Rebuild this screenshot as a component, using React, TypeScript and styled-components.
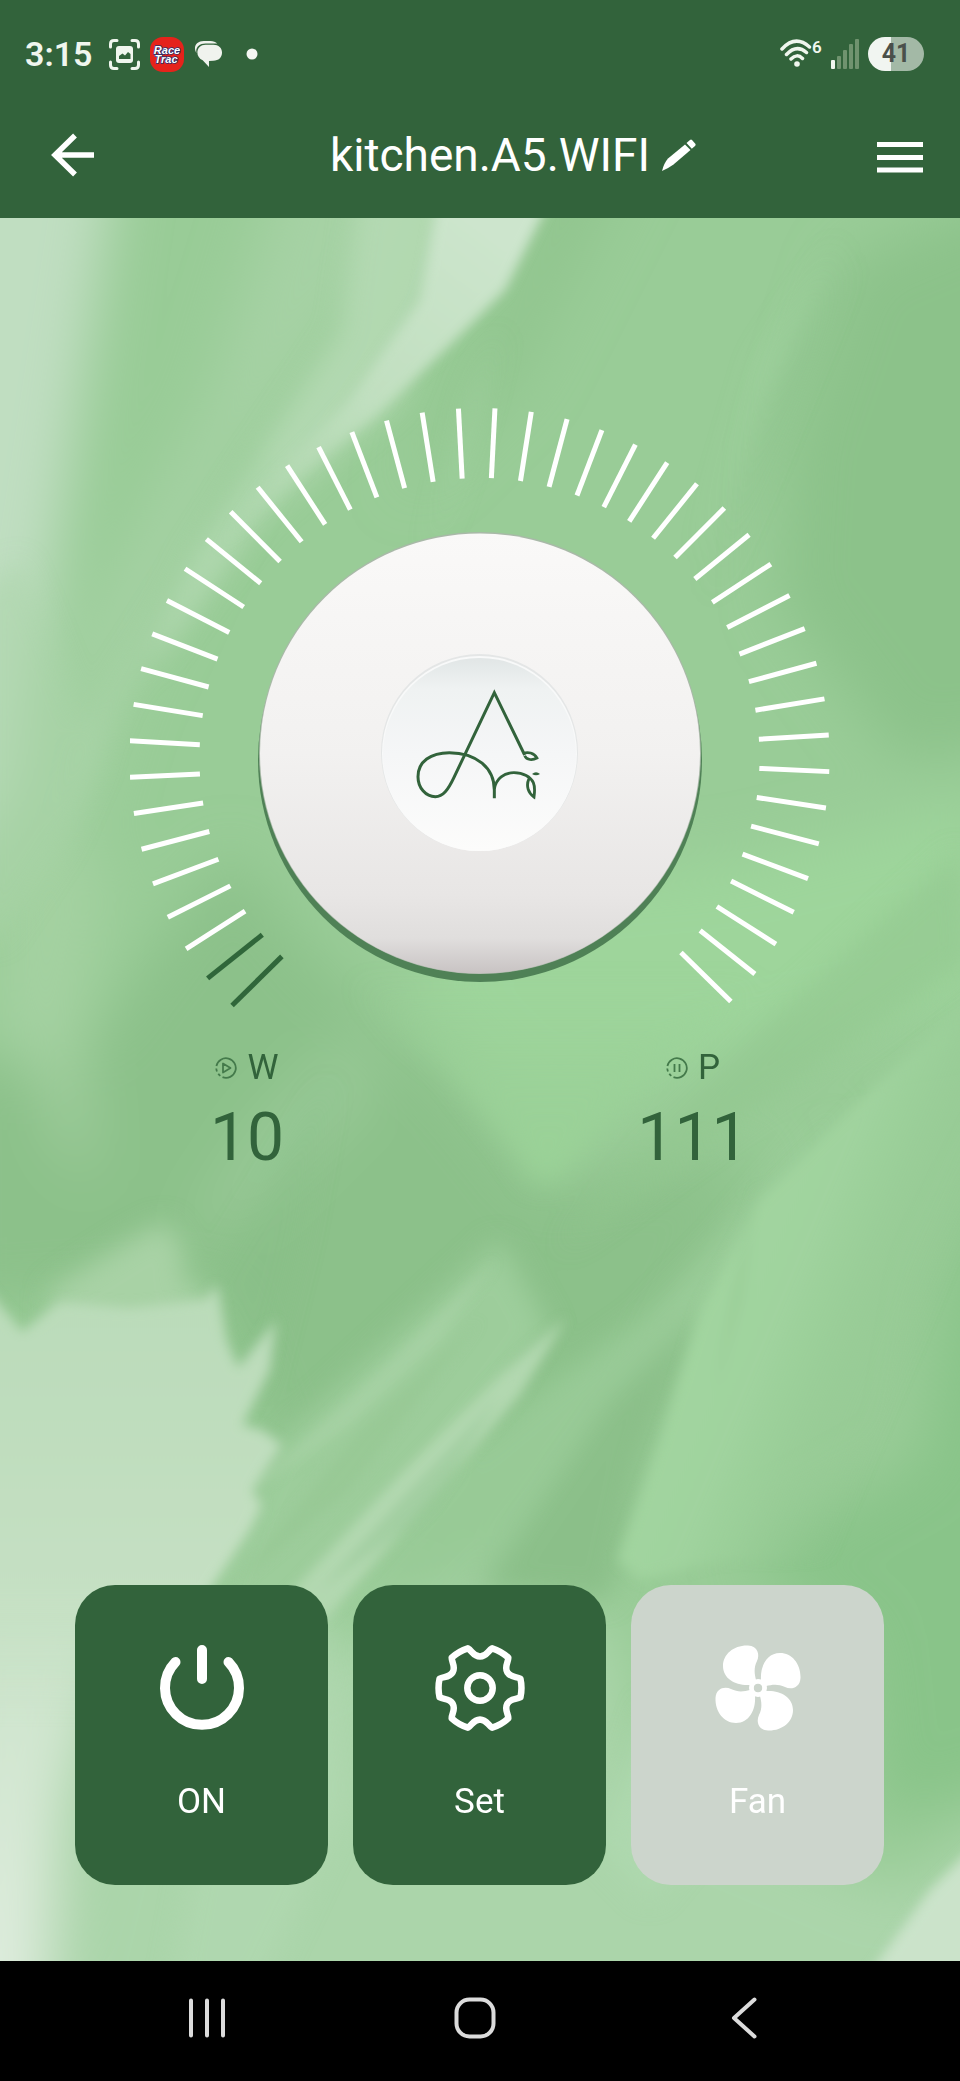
import React from "react";
import styled, { createGlobalStyle } from "styled-components";

const GREEN = "#32633b";

const GlobalStyle = createGlobalStyle`
  * { box-sizing: border-box; }
  body { margin: 0; background: #000; font-family: Roboto, "Liberation Sans", sans-serif; }
  button { margin: 0; padding: 0; border: 0; background: none; color: inherit; font: inherit; cursor: pointer; }
  svg { display: block; }
`;

const Screen = styled.div`
  display: flex;
  flex-direction: column;
  min-height: 100vh;
`;

const Header = styled.header`
  background: ${GREEN};
  color: #fff;
`;

const StatusBar = styled.div`
  display: flex;
  align-items: center;
  justify-content: space-between;
  height: 108px;
  padding: 0 36px 0 25px;
  color: #f0f6ee;
`;

const StatusGroup = styled.div<{ $gap: number }>`
  display: flex;
  align-items: center;
  gap: ${(p) => p.$gap}px;
`;

const Clock = styled.time`
  margin-right: 6px;
  font-size: 34px;
  font-weight: 600;
  line-height: 40px;
`;

const Battery = styled.div`
  width: 56px;
  height: 34px;
  border-radius: 17px;
  background: linear-gradient(90deg, #f1f5f1 41%, #a3b9a6 41%);
  color: #4a504b;
  font-size: 25px;
  font-weight: 700;
  line-height: 34px;
  text-align: center;
`;

const AppBar = styled.div`
  display: grid;
  grid-template-columns: 1fr auto 1fr;
  align-items: center;
  height: 110px;
  padding: 0 37px 16px 51px;
`;

const BarButton = styled.button<{ $end?: boolean }>`
  justify-self: ${(p) => (p.$end ? "end" : "start")};
`;

const TitleGroup = styled.div`
  display: flex;
  align-items: center;
  gap: 12px;
  padding-left: 52px;
`;

const Title = styled.h1`
  margin: 0;
  font-size: 46px;
  font-weight: 400;
  line-height: 52px;
`;

const Main = styled.main`
  position: relative;
  isolation: isolate;
  flex: 1;
  display: flex;
  flex-direction: column;
  padding: 188px 0 76px;
  background: #99cc97;
`;

const Backdrop = styled.svg`
  position: absolute;
  inset: 0;
  z-index: -1;
  width: 100%;
  height: 100%;
`;

const Dial = styled.svg`
  align-self: center;
  width: 100%;
  max-width: 700px;
  height: auto;
`;

const Readings = styled.dl`
  display: grid;
  grid-template-columns: 1fr 1fr;
  margin: 22px 0 60px;
  padding: 0 44px 0 24px;
  color: ${GREEN};
`;

const Reading = styled.div`
  display: flex;
  flex-direction: column;
  align-items: center;
  gap: 12px;
`;

const ReadingName = styled.dt`
  display: flex;
  align-items: center;
  gap: 10px;
  font-size: 35px;
  line-height: 40px;
`;

const ReadingValue = styled.dd`
  margin: 0;
  font-size: 66px;
  line-height: 76px;
`;

const Controls = styled.div`
  display: grid;
  grid-template-columns: repeat(3, 1fr);
  gap: 25px;
  margin-top: auto;
  padding: 0 76px 0 75px;
`;

const ControlCard = styled.button<{ $off?: boolean }>`
  display: flex;
  flex-direction: column;
  align-items: center;
  gap: 46px;
  height: 300px;
  padding-top: 57px;
  border-radius: 40px;
  background: ${(p) => (p.$off ? "#ccd5cc" : GREEN)};
  color: #fff;
  font-size: 35px;
  line-height: 44px;
`;

const SystemNav = styled.nav`
  display: grid;
  grid-template-columns: repeat(3, 1fr);
  place-items: center;
  height: 120px;
  padding: 0 82px 6px 73px;
  background: #000;
  color: #dcdcdc;
`;

const polar = (deg: number, r: number) => {
  const a = (deg * Math.PI) / 180;
  return `${(r * Math.cos(a)).toFixed(2)} ${(r * Math.sin(a)).toFixed(2)}`;
};

const gearPath =
  [0, 60, 120, 180, 240, 300]
    .map(
      (t, i) =>
        `${i ? "L" : "M"}${polar(t - 13, 41.5)} Q${polar(t, 42.5)} ${polar(t + 13, 41.5)} ` +
        `C${polar(t + 18, 38.3)} ${polar(t + 18, 32.3)} ${polar(t + 30, 31.5)} ` +
        `C${polar(t + 42, 32.3)} ${polar(t + 42, 38.3)} ${polar(t + 47, 41.5)}`
    )
    .join(" ") + "Z";

const PowerIcon = () => (
  <svg width="92" height="92" viewBox="-46 -46 92 92" fill="none" stroke="currentColor" strokeWidth="10" strokeLinecap="round" aria-hidden>
    <path d="M-26.500 -26A37 37 0 1 0 26.500 -26M0 -38V-9" />
  </svg>
);

const GearIcon = () => (
  <svg width="92" height="92" viewBox="-46 -46 92 92" fill="none" stroke="currentColor" strokeWidth="6.500" strokeLinejoin="round" aria-hidden>
    <path d={gearPath} />
    <circle r="12.700" />
  </svg>
);

const FanIcon = () => (
  <svg width="92" height="92" viewBox="-46 -46 92 92" fill="currentColor" aria-hidden>
    {[0, 90, 180, 270].map((a) => (
      <path
        key={a}
        transform={`rotate(${a})`}
        d="M3 -8C2 -22 9 -35 22 -35C34 -35 43 -24 42.500 -10C42 0 33 2 27 -1C20 -4.500 14 -3.500 8 -2Z"
      />
    ))}
    <circle r="6.500" fill="none" stroke="currentColor" strokeWidth="5" />
    <circle r="4.200" fill="#ccd5cc" />
  </svg>
);

const ReadingIcon = ({ kind }: { kind: "play" | "pause" }) => (
  <svg width="22" height="22" viewBox="0 0 22 22" fill="none" stroke="#447a4b" strokeWidth="1.800" strokeLinejoin="round" aria-hidden>
    <path d="M1.400 9A9.800 9.800 0 1 1 7.500 20.200" />
    <path d="M1.300 11.500A9.800 9.800 0 0 0 2 14.500M3.300 16.800A9.800 9.800 0 0 0 5.300 18.900" />
    {kind === "play" ? <path d="M8 6.500V15.500L15.500 11Z" /> : <path d="M8.500 7V15M13.500 7V15" />}
  </svg>
);

const ticks = Array.from({ length: 46 }, (_, i) => ({ angle: -134.6 + i * 5.98, active: i < 2 }));

const DialFace = () => (
  <Dial viewBox="0 0 700 620" role="img" aria-label="Intensity dial">
    <defs>
      <linearGradient id="knob" x1="0" y1="0" x2="0" y2="1">
        <stop offset="0" stopColor="#faf9f8" />
        <stop offset="0.500" stopColor="#f2f1f0" />
        <stop offset="0.820" stopColor="#e8e6e5" />
        <stop offset="0.920" stopColor="#e0dedd" />
        <stop offset="1" stopColor="#c8c3c3" />
      </linearGradient>
      <linearGradient id="cap" x1="0" y1="0" x2="0" y2="1">
        <stop offset="0" stopColor="#e1e6e6" />
        <stop offset="0.160" stopColor="#eff2f2" />
        <stop offset="0.500" stopColor="#f5f6f7" />
        <stop offset="1" stopColor="#fcfcfb" />
      </linearGradient>
    </defs>
    {ticks.map((t) => (
      <rect
        key={t.angle}
        x="-5"
        y="-350"
        width="5"
        height="70"
        fill={t.active ? "#30663a" : "#fff"}
        transform={`translate(349.5 352) rotate(${t.angle})`}
      />
    ))}
    <circle cx="350" cy="354" r="222" fill="#4f8156" />
    <circle cx="350" cy="347" r="221" fill="#a9b9a8" />
    <circle cx="350" cy="347.500" r="220" fill="url(#knob)" />
    <circle cx="349.500" cy="346.500" r="98.500" fill="#e4e6e6" />
    <circle cx="349.500" cy="347.500" r="97.500" fill="#f8f9f9" />
    <circle cx="349.500" cy="348.500" r="96.500" fill="url(#cap)" />
    <g transform="translate(230 234) scale(0.333333)" fill="none" stroke={GREEN} strokeWidth="9">
      <path d="M494 345L403 158L282 412C264 450 249 470 226 470C197 470 174 443 174 410C174 365 212 338 268 338C350 338 403 385 403 450V475" />
      <path d="M403 447C408 415 433 398 462 398C490 398 512 411 520 428C526 442 524 457 522 471C505 459 497 438 507 416" strokeWidth="8.500" />
      <path d="M490 341C503 334 522 339 531 354C518 361 500 361 494 347" strokeWidth="8" />
      <path d="M516 402Q528 392 540 402Q528 410 516 402Z" fill={GREEN} stroke="none" />
    </g>
  </Dial>
);

const Painting = () => (
  <Backdrop viewBox="0 218 960 1743" preserveAspectRatio="none" aria-hidden>
    <defs>
      <filter id="edge" x="-30%" y="-30%" width="160%" height="160%">
        <feGaussianBlur stdDeviation="6" />
      </filter>
      <filter id="soft" x="-40%" y="-40%" width="180%" height="180%">
        <feGaussianBlur stdDeviation="13" />
      </filter>
      <filter id="wide" x="-50%" y="-50%" width="200%" height="200%">
        <feGaussianBlur stdDeviation="28" />
      </filter>
      <linearGradient id="pale" gradientUnits="userSpaceOnUse" x1="0" y1="1290" x2="0" y2="1720">
        <stop offset="0" stopColor="#badbb9" />
        <stop offset="0.700" stopColor="#c5e0c3" />
        <stop offset="1" stopColor="#c8e2c6" stopOpacity="0" />
      </linearGradient>
      <linearGradient id="paleFoot" gradientUnits="userSpaceOnUse" x1="0" y1="1500" x2="0" y2="1961">
        <stop offset="0" stopColor="#c4e0c3" />
        <stop offset="1" stopColor="#deecdd" />
      </linearGradient>
      <linearGradient id="beam" gradientUnits="userSpaceOnUse" x1="480" y1="218" x2="220" y2="560">
        <stop offset="0" stopColor="#cde5cd" />
        <stop offset="0.500" stopColor="#c0dfbf" />
        <stop offset="1" stopColor="#b0d8ae" stopOpacity="0" />
      </linearGradient>
      <linearGradient id="petal" gradientUnits="userSpaceOnUse" x1="660" y1="1300" x2="900" y2="1400">
        <stop offset="0" stopColor="#a2d5a0" />
        <stop offset="0.450" stopColor="#a0d39e" />
        <stop offset="1" stopColor="#93c991" stopOpacity="0" />
      </linearGradient>
      <linearGradient id="point" gradientUnits="userSpaceOnUse" x1="0" y1="980" x2="0" y2="1180">
        <stop offset="0" stopColor="#9bd198" stopOpacity="0" />
        <stop offset="0.500" stopColor="#9bd198" stopOpacity="0.800" />
        <stop offset="1" stopColor="#9ad297" />
      </linearGradient>
    </defs>
    <g filter="url(#wide)">
      <path d="M-80 140H120L80 400L50 600L20 780L-80 960Z" fill="#c0dec1" />
      <path d="M290 140H420L360 300L230 470L120 700L60 900L0 1100V900L100 600L210 400Z" fill="#a6d2a4" />
      <path d="M850 260L1040 180V740L900 760L780 600L790 440Z" fill="#8cc28a" />
      <path d="M560 140H640L520 380L400 500L500 300Z" fill="#91c58e" />
      <path d="M60 1080L230 850L320 960L460 1090L540 1190L760 1150L700 1300L620 1450L500 1600L250 1590L270 1450L210 1290L-60 1310V1040Z" fill="#8cc18a" />
      <path d="M0 960L60 1130L90 1190L80 1040L110 860L0 860Z" fill="#a4d1a1" />
      <path d="M1030 1130L950 1280L920 1460L740 1560L860 1640L880 1820L1030 1780Z" fill="#89c489" />
      <path d="M110 1740L500 1570L620 1640L640 1780L900 1890L1030 1800V2040H40Z" fill="#abd5aa" />
      <path d="M-60 1450H150L120 1640L70 1800L40 2040H-60Z" fill="url(#paleFoot)" />
      <path d="M520 880L740 860L980 800V1000L700 1060L540 1120L400 980Z" fill="#9ed59b" />
      <path d="M380 1090L250 1220L180 1240L260 1120L360 1020Z" fill="#98c996" />
    </g>
    <g filter="url(#soft)">
      <path d="M360 190H480L400 400L260 520L150 670L190 560L280 420L340 330Z" fill="#b9dcb8" opacity="0.750" />
      <path d="M310 940L400 1030L450 1070L510 1145L535 1182L560 1178L650 1070L780 970L860 880L760 860L640 900Z" fill="url(#point)" />
      <path d="M290 480L210 560L120 700L60 850L90 720L180 580L260 450Z" fill="#acd5aa" opacity="0.600" />
      <path d="M850 260L790 350L740 500L710 600L780 430Z" fill="#84bb83" opacity="0.300" />
      <path d="M840 240L760 400L700 560L760 360Z" fill="#a8d9a7" opacity="0.400" />
      <path d="M500 330L470 440L430 560L470 400Z" fill="#acd8ab" opacity="0.600" />
      <path d="M-20 590L20 560L100 760L60 850L0 940H-20Z" fill="#a9d4a7" opacity="0.500" />
      <path d="M960 850L780 1010L650 1140L560 1250L700 1150L970 960Z" fill="#93c690" opacity="0.600" />
      <path d="M850 1090L720 1240L640 1320L540 1390L420 1490L300 1620H440L560 1490L680 1350Z" fill="#a0d09e" opacity="0.600" />
      <path d="M700 1310L610 1400L480 1590L610 1600L640 1460Z" fill="#8bbf89" />
      <path d="M500 1240L380 1350L270 1450L200 1620H320L440 1480L550 1330Z" fill="#9dcd9b" />
      <path d="M330 1080L210 1280L260 1400L300 1240Z" fill="#86bc85" opacity="0.300" />
      <path d="M330 1600L220 1720L170 1990L260 1990L350 1800Z" fill="#b2d9b3" opacity="0.600" />
      <path d="M650 1700L600 1850L650 1900L700 1840Z" fill="#add8ae" />
      <path d="M50 1290L130 1240L165 1222L182 1245L185 1290L210 1290V1360H50Z" fill="#a8d2a5" />
    </g>
    <g filter="url(#edge)">
      <path d="M440 190H555L505 290L450 345L370 420L300 475L210 560L260 490L350 400L420 300Z" fill="url(#beam)" />
      <path d="M980 990L860 1100L760 1200L700 1310L660 1440L618 1560L640 1580L720 1560L880 1560L980 1400Z" fill="url(#petal)" />
      <path d="M758 1180L735 1290L715 1390L740 1300Z" fill="#8fc48d" opacity="0.500" />
      <path d="M566 1318L500 1375L400 1475L265 1620H325L420 1510L520 1395Z" fill="#b2d8b0" />
      <path d="M495 1260L380 1370L240 1500L350 1425L440 1340Z" fill="#aad3a8" opacity="0.600" />
      <path d="M480 1320L360 1430L230 1590L350 1490Z" fill="#93c591" opacity="0.500" />
      <path d="M500 1395L400 1500L320 1590L430 1510Z" fill="#94c693" opacity="0.500" />
      <path d="M-20 1280L22 1332L60 1302L130 1308L205 1300L217 1285L226 1340L238 1368L276 1320L270 1370L242 1425L262 1430L282 1445L252 1490L262 1505L250 1530L210 1590L170 1700L150 1740H-20Z" fill="url(#pale)" />
      <path d="M980 1840L930 1890L865 1980H980Z" fill="#cbe3ca" />
    </g>
  </Backdrop>
);

export default function App() {
  return (
    <Screen>
      <GlobalStyle />
      <Header>
        <StatusBar>
          <StatusGroup $gap={10}>
            <Clock>3:15</Clock>
            <svg width="31" height="31" viewBox="0 0 31 31" fill="none" stroke="currentColor" strokeWidth="3" strokeLinecap="round" aria-hidden>
              <path d="M1.500 8V5Q1.500 1.500 5 1.500H8M23 1.500H26Q29.500 1.500 29.500 5V8M29.500 23V26Q29.500 29.500 26 29.500H23M8 29.500H5Q1.500 29.500 1.500 26V23" />
              <rect x="7" y="7" width="17" height="17" rx="3" fill="currentColor" stroke="none" />
              <path d="M10 20V17L13.500 14.500L16 16.500L19 13L21.500 15V20Z" fill={GREEN} stroke="none" />
            </svg>
            <svg width="34" height="35" viewBox="0 0 34 35" aria-label="RaceTrac" role="img">
              <rect width="34" height="35" rx="13" fill="#e5231b" />
              <g fill="#fff" stroke="#28306e" strokeWidth="1.500" paintOrder="stroke" fontFamily="Liberation Sans, sans-serif" fontSize="11" fontWeight="700" fontStyle="italic" textAnchor="middle">
                <text x="17" y="17">Race</text>
                <text x="16" y="26">Trac</text>
              </g>
            </svg>
            <svg width="29" height="28" viewBox="0 0 30 28" fill="#f0f3ee" aria-hidden>
              <path d="M2.500 13C-1.500 6 3 0.500 10 0.500H17C20 0.500 22.500 1.500 24 3.200H12C5 3.200 1.500 7.500 2.500 13Z" />
              <path d="M12 4.500H20C25.500 4.500 29 8 29 12.500C29 17.500 25.500 21 20 21L15.500 21.200V27.500L9 20.500C5.500 19 3.500 16 3.500 12.500C3.500 8 7 4.500 12 4.500Z" />
            </svg>
            <svg width="36" height="12" viewBox="0 0 36 12" aria-hidden>
              <circle cx="19" cy="6" r="5.500" fill="#f4f7f2" />
            </svg>
          </StatusGroup>
          <StatusGroup $gap={7}>
            <svg width="44" height="36" viewBox="0 -2 44 36" fill="none" stroke="currentColor" strokeWidth="3.500" strokeLinecap="round" role="img" aria-label="Wi-Fi 6">
              <path d="M2 11Q15.500 -3.500 29.500 9M6.500 16.500Q16.500 6 26.500 14.500M11 21Q17 15 22.500 20.500" />
              <circle cx="17" cy="26" r="2.800" fill="currentColor" stroke="none" />
              <text x="32" y="15" fontSize="17" fontWeight="600" fill="currentColor" stroke="none">6</text>
            </svg>
            <svg width="30" height="30" viewBox="0 0 30 30" aria-hidden>
              <rect x="0" y="21" width="4" height="9" rx="1" fill="currentColor" />
              <g fill="#70936f">
                <rect x="6" y="17" width="4" height="13" rx="1" />
                <rect x="12" y="11" width="4" height="19" rx="1" />
                <rect x="18" y="5" width="4" height="25" rx="1" />
                <rect x="24" y="0" width="4" height="30" rx="1" />
              </g>
            </svg>
            <Battery>41</Battery>
          </StatusGroup>
        </StatusBar>
        <AppBar>
          <BarButton aria-label="Back">
            <svg width="44" height="44" viewBox="0 0 44 44" fill="none" stroke="currentColor" strokeWidth="5.500" aria-hidden>
              <path d="M43 22H4M24 2.500L4 22L24 41.500" />
            </svg>
          </BarButton>
          <TitleGroup>
            <Title>kitchen.A5.WIFI</Title>
            <button aria-label="Rename">
              <svg width="34" height="32" viewBox="0 0 34 32" fill="currentColor" aria-hidden>
                <path d="M0 32Q2 24 6 19.500L23 5.500L28.500 11L11.500 25.500Q6 29.500 0 32Z" />
                <path d="M24.500 4L28 1Q29 0 30 1L33.500 5Q34 6 33 7L29.800 9.800Z" />
              </svg>
            </button>
          </TitleGroup>
          <BarButton $end aria-label="Menu">
            <svg width="46" height="36" viewBox="0 0 46 36" fill="currentColor" aria-hidden>
              <path d="M0 5H46V10H0ZM0 18H46V23H0ZM0 30.500H46V35.500H0Z" />
            </svg>
          </BarButton>
        </AppBar>
      </Header>
      <Main>
        <Painting />
        <DialFace />
        <Readings>
          <Reading>
            <ReadingName>
              <ReadingIcon kind="play" />W
            </ReadingName>
            <ReadingValue>10</ReadingValue>
          </Reading>
          <Reading>
            <ReadingName>
              <ReadingIcon kind="pause" />P
            </ReadingName>
            <ReadingValue>111</ReadingValue>
          </Reading>
        </Readings>
        <Controls>
          <ControlCard>
            <PowerIcon />
            ON
          </ControlCard>
          <ControlCard>
            <GearIcon />
            Set
          </ControlCard>
          <ControlCard $off>
            <FanIcon />
            Fan
          </ControlCard>
        </Controls>
      </Main>
      <SystemNav aria-label="System">
        <button aria-label="Recent apps">
          <svg width="40" height="42" viewBox="0 0 40 42" stroke="currentColor" strokeWidth="4" strokeLinecap="round" aria-hidden>
            <path d="M4 3.500V38.500M20 3.500V38.500M36 3.500V38.500" />
          </svg>
        </button>
        <button aria-label="Home">
          <svg width="42" height="42" viewBox="0 0 42 42" fill="none" stroke="currentColor" strokeWidth="4" aria-hidden>
            <rect x="2.500" y="2.500" width="37" height="37" rx="13" />
          </svg>
        </button>
        <button aria-label="Back">
          <svg width="26" height="42" viewBox="0 0 26 42" fill="none" stroke="currentColor" strokeWidth="4" strokeLinecap="round" strokeLinejoin="round" aria-hidden>
            <path d="M23.500 2.500L3 21L23.500 39.500" />
          </svg>
        </button>
      </SystemNav>
    </Screen>
  );
}
